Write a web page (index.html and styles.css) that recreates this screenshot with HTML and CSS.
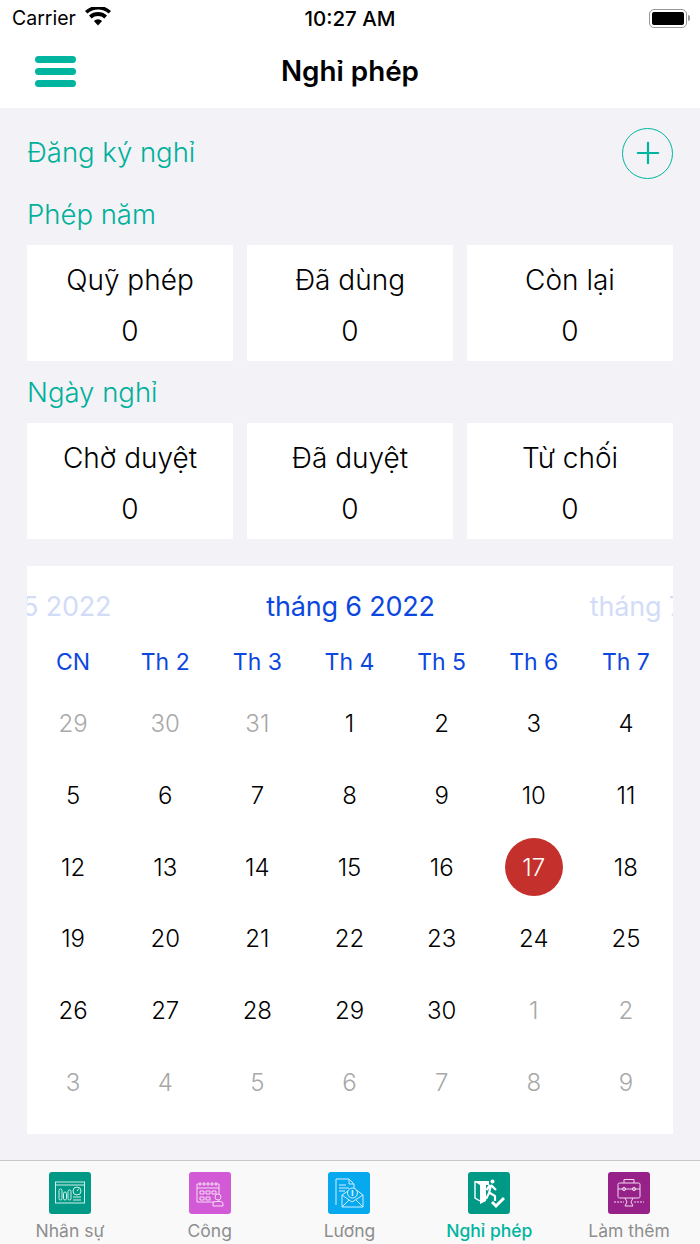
FILE: index.html
```html
<!DOCTYPE html>
<html lang="vi">
<head>
    <meta charset="UTF-8">
    <meta name="viewport" content="width=device-width, initial-scale=1.0">
    <title>Nghỉ phép</title>
    <link rel="stylesheet" href="styles.css">
</head>
<body>
    <div class="phone">
        <div class="status-bar">
            <div class="status-left">
                <span>Carrier</span>
                <svg class="wifi" width="26" height="19" viewBox="0 0 26 19">
                    <path d="M13 18.5 L8.9 13.9 A6.2 6.2 0 0 1 17.1 13.9 Z" fill="#000"/>
                    <path d="M6.6 11.4 L4 8.5 A13.4 13.4 0 0 1 22 8.5 L19.4 11.4 A9.6 9.6 0 0 0 6.6 11.4 Z" fill="#000"/>
                    <path d="M2.4 6.6 L0 4 A19 19 0 0 1 26 4 L23.6 6.6 A15.6 15.6 0 0 0 2.4 6.6 Z" fill="#000"/>
                </svg>
            </div>
            <div class="status-time">10:27 AM</div>
            <div class="status-right">
                <div class="battery"><div class="battery-fill"></div></div>
                <div class="battery-cap"></div>
            </div>
        </div>

        <header class="nav-bar">
            <button class="menu-button" aria-label="Menu">
                <span></span><span></span><span></span>
            </button>
            <h1>Nghỉ phép</h1>
        </header>

        <main class="content">
            <div class="register-row">
                <h2 class="section-title register-title">Đăng ký nghỉ</h2>
                <button class="add-button" aria-label="Thêm">
                    <svg width="24" height="24" viewBox="0 0 26 26">
                        <path d="M13 2 V24 M2 13 H24" stroke="#00b5a0" stroke-width="2.4" stroke-linecap="round" fill="none"/>
                    </svg>
                </button>
            </div>

            <h2 class="section-title section-title-sub">Phép năm</h2>
            <div class="stat-row">
                <div class="stat-card"><div class="stat-label">Quỹ phép</div><div class="stat-value">0</div></div>
                <div class="stat-card"><div class="stat-label">Đã dùng</div><div class="stat-value">0</div></div>
                <div class="stat-card"><div class="stat-label">Còn lại</div><div class="stat-value">0</div></div>
            </div>

            <h2 class="section-title section-title-sub">Ngày nghỉ</h2>
            <div class="stat-row">
                <div class="stat-card"><div class="stat-label">Chờ duyệt</div><div class="stat-value">0</div></div>
                <div class="stat-card"><div class="stat-label">Đã duyệt</div><div class="stat-value">0</div></div>
                <div class="stat-card"><div class="stat-label">Từ chối</div><div class="stat-value">0</div></div>
            </div>

            <section class="calendar">
                <div class="month-strip">
                    <span class="month month-faded">tháng 5 2022</span>
                    <span class="month">tháng 6 2022</span>
                    <span class="month month-faded">tháng 7 2022</span>
                </div>
                <div class="week-row">
                    <span>CN</span><span>Th 2</span><span>Th 3</span><span>Th 4</span><span>Th 5</span><span>Th 6</span><span>Th 7</span>
                </div>
                <div class="day-grid">
                    <span class="day muted">29</span><span class="day muted">30</span><span class="day muted">31</span><span class="day">1</span><span class="day">2</span><span class="day">3</span><span class="day">4</span>
                    <span class="day">5</span><span class="day">6</span><span class="day">7</span><span class="day">8</span><span class="day">9</span><span class="day">10</span><span class="day">11</span>
                    <span class="day">12</span><span class="day">13</span><span class="day">14</span><span class="day">15</span><span class="day">16</span><span class="day today"><b>17</b></span><span class="day">18</span>
                    <span class="day">19</span><span class="day">20</span><span class="day">21</span><span class="day">22</span><span class="day">23</span><span class="day">24</span><span class="day">25</span>
                    <span class="day">26</span><span class="day">27</span><span class="day">28</span><span class="day">29</span><span class="day">30</span><span class="day muted">1</span><span class="day muted">2</span>
                    <span class="day muted">3</span><span class="day muted">4</span><span class="day muted">5</span><span class="day muted">6</span><span class="day muted">7</span><span class="day muted">8</span><span class="day muted">9</span>
                </div>
            </section>
        </main>

        <nav class="tab-bar">
            <a class="tab" href="#">
                <span class="tab-icon icon-green">
                    <svg width="32" height="32" viewBox="0 0 32 32" fill="none" stroke="#cfeee8" stroke-width="1">
                        <rect x="1.5" y="5" width="29" height="21"/>
                        <path d="M1.5 8 H30.5"/>
                        <rect x="5" y="12" width="3" height="11" rx="1.5"/>
                        <rect x="9.5" y="15" width="3" height="8" rx="1.5"/>
                        <rect x="14" y="13" width="3" height="10" rx="1.5"/>
                        <circle cx="23" cy="14" r="4"/>
                        <path d="M23 14 L25 11.5 M19 20 H27 M19 23 H27"/>
                    </svg>
                </span>
                <span class="tab-label">Nhân sự</span>
            </a>
            <a class="tab" href="#">
                <span class="tab-icon icon-pink">
                    <svg width="32" height="32" viewBox="0 0 32 32" fill="none" stroke="#f6dcf3" stroke-width="1">
                        <path d="M3 7 H25 V25 H3 Z M3 11 H25"/>
                        <path d="M6 5 V9 M10 5 V9 M14 5 V9 M18 5 V9 M22 5 V9"/>
                        <path d="M6 14 H10 V17 H6 Z M12 14 H16 V17 H12 Z M18 14 H22 V17 H18 Z M6 20 H10 V23 H6 Z M12 20 H16 V23 H12 Z"/>
                        <circle cx="24" cy="20" r="3" fill="#d35ad6"/>
                        <path d="M19 29 V27 Q19 24.5 21.5 24.5 H26.5 Q29 24.5 29 27 V29 Z" fill="#d35ad6"/>
                    </svg>
                </span>
                <span class="tab-label">Công</span>
            </a>
            <a class="tab" href="#">
                <span class="tab-icon icon-blue">
                    <svg width="32" height="32" viewBox="0 0 32 32" fill="none" stroke="#d3effc" stroke-width="1">
                        <path d="M3 28 V2 H16 L21 7 V12"/>
                        <path d="M16 2 V7 H21"/>
                        <path d="M6 8 H13 M6 11 H16 M6 14 H12"/>
                        <path d="M9 18 L18 12 H22 L30 18 V30 H9 Z" fill="#07a9ee"/>
                        <path d="M9 18 L19 25 L30 18 M9 30 L16 23 M30 30 L23 23"/>
                        <circle cx="19.5" cy="16" r="5" fill="#07a9ee"/>
                        <path d="M19.5 13 V19" stroke-width="1.6"/>
                    </svg>
                </span>
                <span class="tab-label">Lương</span>
            </a>
            <a class="tab tab-active" href="#">
                <span class="tab-icon icon-green">
                    <svg width="32" height="32" viewBox="0 0 32 32">
                        <path d="M2 4 H16 V8 H13 V24 L7 27 V8 L2 5 Z" fill="#fff"/>
                        <path d="M2 4 L2 21 L7 24" fill="none" stroke="#fff" stroke-width="1.4"/>
                        <circle cx="19.5" cy="4.5" r="2" fill="#fff"/>
                        <path d="M17 8 L13.5 13 M18 8 L23 13 M18 8 L16 16 L13 22 M17 16 L22 19 L22 24" fill="none" stroke="#fff" stroke-width="2.2"/>
                        <path d="M19 25 L23 29 L31 21" fill="none" stroke="#fff" stroke-width="3"/>
                    </svg>
                </span>
                <span class="tab-label">Nghỉ phép</span>
            </a>
            <a class="tab" href="#">
                <span class="tab-icon icon-purple">
                    <svg width="32" height="32" viewBox="0 0 32 32" fill="none" stroke="#f3d9f0" stroke-width="1">
                        <rect x="5" y="6" width="22" height="15" rx="1.5"/>
                        <path d="M11 6 V2.5 H21 V6 M5 12 H27"/>
                        <circle cx="11" cy="12" r="1.6"/>
                        <circle cx="21" cy="12" r="1.6"/>
                        <path d="M12 21 L14 25 L12 29 H20 L18 25 L20 21"/>
                        <path d="M1 25 H11 M21 25 H31" stroke-dasharray="2 1"/>
                    </svg>
                </span>
                <span class="tab-label">Làm thêm</span>
            </a>
        </nav>
    </div>
</body>
</html>
```

FILE: styles.css
```css
body {
    font-family: Inter, "Noto Sans", sans-serif;
    margin: 0;
    padding: 0;
    background-color: #f2f2f7;
    color: #000;
}
button {
    border: none;
    background: none;
    padding: 0;
    font: inherit;
}
.phone {
    width: 700px;
    height: 1244px;
    display: flex;
    flex-direction: column;
    overflow: hidden;
}

/* status bar */
.status-bar {
    height: 40px;
    flex: none;
    background-color: #fff;
    display: flex;
    align-items: center;
    justify-content: space-between;
    padding: 0 10px 4px 12px;
    box-sizing: border-box;
    font-size: 19.5px;
    position: relative;
}
.status-left {
    display: flex;
    align-items: center;
    gap: 9px;
}
.wifi {
    margin-top: -4px;
}
.status-time {
    position: absolute;
    left: 0;
    right: 0;
    top: 6px;
    text-align: center;
    font-size: 20.5px;
    font-weight: 500;
}
.status-right {
    display: flex;
    align-items: center;
    gap: 1px;
}
.battery {
    width: 38px;
    height: 19px;
    box-sizing: border-box;
    border: 1.5px solid #999;
    border-radius: 5px;
    padding: 2px;
}
.battery-fill {
    height: 100%;
    background-color: #000;
    border-radius: 2px;
}
.battery-cap {
    width: 2px;
    height: 6px;
    background-color: #999;
    border-radius: 0 2px 2px 0;
}

/* nav bar */
.nav-bar {
    height: 68px;
    flex: none;
    background-color: #fff;
    display: flex;
    align-items: center;
    justify-content: center;
    position: relative;
}
.nav-bar h1 {
    margin: 0 0 6px;
    font-size: 27.8px;
    font-weight: 600;
}
.menu-button {
    position: absolute;
    left: 35px;
    top: 16px;
    width: 41px;
    display: flex;
    flex-direction: column;
    gap: 5px;
}
.menu-button span {
    display: block;
    height: 7px;
    background-color: #00b5a0;
    border-radius: 4px;
}

/* main content */
.content {
    flex: 1;
    padding: 20px 27px 0;
}
.register-row {
    display: flex;
    align-items: center;
    justify-content: space-between;
    height: 50px;
}
.section-title {
    margin: 0;
    font-size: 27.5px;
    font-weight: 300;
    color: #00b09b;
}
.register-title {
    margin-bottom: 2px;
}
.section-title-sub {
    height: 36px;
    line-height: 34px;
}
.register-row + .section-title-sub {
    margin-top: 19px;
}
.add-button {
    width: 51px;
    height: 51px;
    box-sizing: border-box;
    border: 1px solid #00b5a0;
    border-radius: 50%;
    display: flex;
    align-items: center;
    justify-content: center;
}
.stat-row {
    display: flex;
    gap: 14px;
    margin: 12px 0 14px;
}
.stat-card {
    flex: 1;
    height: 116px;
    background-color: #fff;
    text-align: center;
    font-size: 28px;
    font-weight: 300;
    display: flex;
    flex-direction: column;
    align-items: center;
    padding-top: 18px;
    box-sizing: border-box;
}
.stat-label {
    height: 34px;
    line-height: 34px;
}
.stat-value {
    margin-top: 17px;
    height: 34px;
    line-height: 34px;
}

/* calendar */
.calendar {
    margin-top: 27px;
    height: 568px;
    background-color: #fff;
    overflow: hidden;
}
.month-strip {
    display: flex;
    justify-content: center;
    gap: 155px;
    height: 80px;
    align-items: center;
}
.month {
    flex: none;
    font-size: 27px;
    letter-spacing: -0.2px;
    color: #0c47e0;
    white-space: nowrap;
}
.month-faded {
    color: #d2dcf8;
}
.week-row,
.day-grid {
    display: grid;
    grid-template-columns: repeat(7, 1fr);
    text-align: center;
    padding-right: 1px;
}
.week-row {
    height: 32px;
    line-height: 32px;
    font-size: 23px;
    color: #0c47e0;
}
.day-grid {
    grid-auto-rows: 71.7px;
    margin-top: 10px;
}
.day {
    display: flex;
    align-items: center;
    justify-content: center;
    font-size: 24px;
    font-weight: 300;
}
.muted {
    color: #a8a8a8;
}
.today b {
    width: 58px;
    height: 58px;
    border-radius: 50%;
    background-color: #c4302b;
    color: #fff;
    font-weight: 300;
    display: flex;
    align-items: center;
    justify-content: center;
}

/* tab bar */
.tab-bar {
    height: 84px;
    flex: none;
    box-sizing: border-box;
    border-top: 1px solid #c8c8cc;
    background-color: #f9f9f9;
    display: flex;
}
.tab {
    width: 139.8px;
    display: flex;
    flex-direction: column;
    align-items: center;
    padding-top: 11px;
    text-decoration: none;
    color: #8e8e8e;
    font-size: 17.5px;
}
.tab-active {
    color: #00b5a0;
    font-weight: 500;
}
.tab-icon {
    width: 42px;
    height: 42px;
    border-radius: 3px;
    display: flex;
    align-items: center;
    justify-content: center;
}
.tab-label {
    margin-top: 6px;
}
.icon-green {
    background-color: #009986;
}
.icon-pink {
    background-color: #d35ad6;
}
.icon-blue {
    background-color: #07a9ee;
}
.icon-purple {
    background-color: #962289;
}
```
